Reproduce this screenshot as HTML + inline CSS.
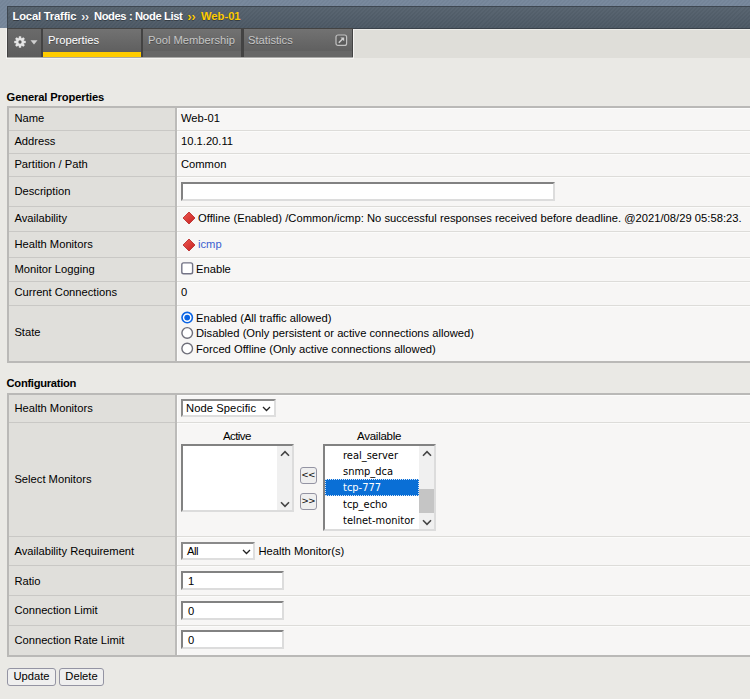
<!DOCTYPE html>
<html><head><meta charset="utf-8">
<title>Web-01</title>
<style>
html,body{margin:0;padding:0;}
body{width:750px;height:699px;overflow:hidden;background:#eae9e5;font-family:"Liberation Sans",Arial,sans-serif;font-size:11.2px;color:#000;position:relative;letter-spacing:0}
div,span,a{position:absolute;white-space:nowrap;box-sizing:border-box}
.t{line-height:14px;height:14px}
.b{font-weight:bold;letter-spacing:-0.25px}
#topbg{left:0;top:0;width:750px;height:28px;background:#76879b;background-image:repeating-linear-gradient(135deg,rgba(255,255,255,0.02) 0 1.42px,rgba(0,0,0,0.02) 1.42px 2.84px);border-bottom:0;}
#crumb{left:7px;top:6px;width:750px;height:23px;background-image:repeating-linear-gradient(135deg,rgba(255,255,255,0.02) 0 1.42px,rgba(0,0,0,0.025) 1.42px 2.84px),linear-gradient(#57636f,#4d5965);border-top:1px solid #3e4751;border-left:1px solid #3e4751;border-bottom:1px solid #3a424b;color:#fff;text-shadow:0 1px 0 rgba(0,0,0,.35);}
#crumb .t{top:2px}
.y{color:#ffcc00}
#tabrow{left:0;top:29px;width:750px;height:29px;background:#dfded9;border-top:1px solid #ecebe8}
#tableft{left:0;top:29px;width:7px;height:30px;background:#eae9e5}
#tabsw{left:6px;top:29px;width:348px;height:30px;background:#f5f4f2}
#tabsh{left:7px;top:57px;width:346px;height:1px;background:#a9a9a7}
#tabs{left:7px;top:28px;height:29px;width:346px;background:#434343;}
.tab{top:1px;height:28px;color:#fff;background:linear-gradient(#727272,#5b5b5b);text-shadow:0 1px 0 rgba(0,0,0,.3)}
.tab .t{top:4px}
.tab i{position:absolute;left:0;right:0;bottom:0;height:6px;background:#676767}
.tab.on i{background:#ffcc00;height:5px}
.off{color:#c6c6c6}
.tbl{left:7px;width:760px;background:#f7f6f5;border-left:2px solid;border-top:2px solid;border-bottom:2px solid;border-color:#bab9b7}
.lc{left:0;top:0;width:168px;bottom:0;background:#e0dfdb;border-right:2px solid #bcbbb9;}
.vs{left:168px;top:0;width:1px;bottom:0;background:#fcfcfb}
.vt{left:168px;right:0;top:0;height:1px;background:#fcfcfb}
.hl{left:0;width:166px;height:1px;background:#c9c8c5}
.hv{left:168px;right:0;height:1px;background:#dddcd9;box-shadow:0 1px 0 #fbfbfa}
.in{background:#fff;border:2px solid;border-color:#828282 #dcdcdc #dcdcdc #828282;}
.btn{background:#efefef;border:1px solid #9494a3;border-radius:3px;text-align:center}
.lb{font-family:"DejaVu Sans Condensed","DejaVu Sans","Liberation Sans",sans-serif;font-size:11px;letter-spacing:0;line-height:16px;height:16px;left:18px}
.rad{width:12px;height:12px;border-radius:50%;border:1px solid #666;background:#fff}
</style></head><body>
<div id="topbg"></div>
<div id="crumb">
 <span class="t b" style="left:4.5px;letter-spacing:-0.17px">Local Traffic</span>
 <span class="t b" style="left:73.3px;letter-spacing:-0.2px;color:#eee;font-size:12px;top:2.6px">››</span>
 <span class="t b" style="left:86px;letter-spacing:-0.4px">Nodes : Node List</span>
 <span class="t b y" style="left:179.6px;letter-spacing:-0.2px;font-size:12px;top:2.6px">››</span>
 <span class="t b y" style="left:193px;letter-spacing:0">Web-01</span>
</div>
<div id="tabrow"></div>
<div id="tableft"></div>
<div id="tabsw"></div><div id="tabsh"></div>
<div id="tabs">
 <div class="tab" style="left:1px;width:33px;background:linear-gradient(#6a6a6a,#5c5c5c)">
  <svg style="position:absolute;left:4.7px;top:6.3px" width="14" height="14" viewBox="-7.3 -7.3 14.6 14.6"><g fill="#e4e4e4"><circle r="4.1"/><rect x="-1.3" y="-6" width="2.6" height="12" rx=".5"/><rect x="-6" y="-1.3" width="12" height="2.6" rx=".5"/><g transform="rotate(45)"><rect x="-1.3" y="-6" width="2.6" height="12" rx=".5"/><rect x="-6" y="-1.3" width="12" height="2.6" rx=".5"/></g></g><circle r="1.7" fill="#5a5a5a"/></svg>
  <svg style="position:absolute;left:22px;top:11.4px" width="8" height="5" viewBox="0 0 8 5"><path d="M0.5 0.3h7L4 4.6z" fill="#cfcfcf"/></svg>
 </div>
 <div class="tab on" style="left:36px;width:98px"><span class="t" style="left:5px">Properties</span><i></i></div>
 <div class="tab off" style="left:136px;width:98px"><span class="t" style="left:5px">Pool Membership</span><i></i></div>
 <div class="tab off" style="left:237px;width:108px"><span class="t" style="left:4px">Statistics</span><i></i>
  <svg style="position:absolute;left:91px;top:5px" width="13" height="13" viewBox="0 0 13 13"><rect x="1" y="1" width="10.6" height="10.4" rx="2" fill="rgba(0,0,0,.1)" stroke="#c2c2c2" stroke-width="1.2"/><path d="M3.8 8.8L7.8 4.8" stroke="#d0d0d0" stroke-width="1.5" fill="none"/><path d="M5.4 3.5h3.8v3.8z" fill="#d0d0d0"/></svg>
 </div>
</div>

<span class="t b" style="left:6.6px;top:90px;letter-spacing:-0.14px">General Properties</span>
<div class="tbl" style="top:106px;height:257px">
 <div class="lc"></div><div class="vs"></div><div class="vt"></div>
 <div class="hl" style="top:22px"></div><div class="hv" style="top:22px"></div>
 <div class="hl" style="top:45px"></div><div class="hv" style="top:45px"></div>
 <div class="hl" style="top:68px"></div><div class="hv" style="top:68px"></div>
 <div class="hl" style="top:98px"></div><div class="hv" style="top:98px"></div>
 <div class="hl" style="top:123px"></div><div class="hv" style="top:123px"></div>
 <div class="hl" style="top:149px"></div><div class="hv" style="top:149px"></div>
 <div class="hl" style="top:173px"></div><div class="hv" style="top:173px"></div>
 <div class="hl" style="top:197px"></div><div class="hv" style="top:197px"></div>
</div>
<span class="t" style="left:14.4px;top:111px">Name</span><span class="t" style="left:181px;top:111px">Web-01</span>
<span class="t" style="left:14.4px;top:134px">Address</span><span class="t" style="left:181px;top:134px">10.1.20.11</span>
<span class="t" style="left:14.4px;top:157px">Partition / Path</span><span class="t" style="left:181px;top:157px">Common</span>
<span class="t" style="left:14.4px;top:184px">Description</span><div class="in" style="left:181px;top:182px;width:374px;height:19px"></div>
<span class="t" style="left:14.4px;top:211px">Availability</span>
<svg style="position:absolute;left:182px;top:211px" width="14" height="14" viewBox="0 0 14 14"><defs><linearGradient id="dg" x1="0" y1="0" x2="1" y2="1"><stop offset="0" stop-color="#f05a52"/><stop offset="1" stop-color="#c41f1f"/></linearGradient></defs><path d="M7 1L13 7L7 13L1 7z" fill="url(#dg)" stroke="#b52323" stroke-width=".8"/></svg>
<span class="t" style="left:198px;top:211px;letter-spacing:0.02px">Offline (Enabled) /Common/icmp: No successful responses received before deadline. @2021/08/29 05:58:23.</span>
<span class="t" style="left:14.4px;top:237px">Health Monitors</span>
<svg style="position:absolute;left:182px;top:237.5px" width="14" height="14" viewBox="0 0 14 14"><path d="M7 1L13 7L7 13L1 7z" fill="url(#dg)" stroke="#b52323" stroke-width=".8"/></svg>
<a class="t" style="left:198px;top:237px;color:#3b5fd0">icmp</a>
<span class="t" style="left:14.4px;top:262px">Monitor Logging</span>
<svg style="position:absolute;left:180px;top:261px" width="15" height="15" viewBox="0 0 15 15"><rect x="1.8" y="1.9" width="10.8" height="10.8" rx="1.8" fill="#fff" stroke="#737385" stroke-width="1.4"/></svg>
<span class="t" style="left:196px;top:262px">Enable</span>
<span class="t" style="left:14.4px;top:285px">Current Connections</span><span class="t" style="left:181px;top:285px">0</span>
<span class="t" style="left:14.4px;top:325px">State</span>
<svg style="position:absolute;left:180px;top:310px" width="15" height="46" viewBox="0 0 15 46"><circle cx="7.2" cy="7.6" r="5.2" fill="#fff" stroke="#0a64e4" stroke-width="1.6"/><circle cx="7.2" cy="7.6" r="2.9" fill="#0a64e4"/><circle cx="7.2" cy="22.9" r="5.3" fill="#fff" stroke="#6f6f7a" stroke-width="1.4"/><circle cx="7.2" cy="38.6" r="5.3" fill="#fff" stroke="#6f6f7a" stroke-width="1.4"/></svg>
<span class="t" style="left:196px;top:311px">Enabled (All traffic allowed)</span>
<span class="t" style="left:196px;top:326px">Disabled (Only persistent or active connections allowed)</span>
<span class="t" style="left:196px;top:342px">Forced Offline (Only active connections allowed)</span>

<span class="t b" style="left:6.6px;top:376px;letter-spacing:-0.3px">Configuration</span>
<div class="tbl" style="top:393px;height:264px">
 <div class="lc"></div><div class="vs"></div><div class="vt"></div>
 <div class="hl" style="top:27px"></div><div class="hv" style="top:27px"></div>
 <div class="hl" style="top:141px"></div><div class="hv" style="top:141px"></div>
 <div class="hl" style="top:170px"></div><div class="hv" style="top:170px"></div>
 <div class="hl" style="top:200px"></div><div class="hv" style="top:200px"></div>
 <div class="hl" style="top:230px"></div><div class="hv" style="top:230px"></div>
</div>
<span class="t" style="left:14.4px;top:401px">Health Monitors</span>
<div class="in" style="left:181px;top:399px;width:95px;height:18px;border-color:#8a8a8a #dedede #dedede #8a8a8a"><span class="t" style="left:3px;top:0px;letter-spacing:0.08px">Node Specific</span>
 <svg style="position:absolute;left:79.4px;top:5px" width="9" height="6" viewBox="0 0 9 6"><path d="M1 1L4.5 4.5L8 1" fill="none" stroke="#222" stroke-width="1.3"/></svg></div>
<span class="t" style="left:14.4px;top:472px">Select Monitors</span>
<span class="t" style="left:223px;top:429px;font-size:11.5px;letter-spacing:-0.6px">Active</span>
<span class="t" style="left:357px;top:429px;font-size:11.5px;letter-spacing:-0.25px">Available</span>
<div class="in" style="left:181px;top:444px;width:113px;height:68px">
 <div style="right:0;top:0;width:15px;bottom:0;background:#f0f0f0"></div>
 <svg style="position:absolute;left:97px;top:4.3px" width="10" height="7" viewBox="0 0 10 7"><path d="M1 5.7L5 1.7L9 5.7" fill="none" stroke="#444" stroke-width="1.6"/></svg>
 <svg style="position:absolute;left:97px;top:54.5px" width="10" height="7" viewBox="0 0 10 7"><path d="M1 1.3L5 5.3L9 1.3" fill="none" stroke="#444" stroke-width="1.6"/></svg>
</div>
<div class="btn" style="left:300px;top:467px;width:17px;height:17px"><span style="left:0;right:0;top:1px;font-size:9.3px;line-height:12px;letter-spacing:0;transform:scaleX(1.22)">&lt;&lt;</span></div>
<div class="btn" style="left:300px;top:493px;width:17px;height:17px"><span style="left:0;right:0;top:1px;font-size:9.3px;line-height:12px;letter-spacing:0;transform:scaleX(1.22)">&gt;&gt;</span></div>
<div class="in" style="left:323px;top:444px;width:113px;height:87px;overflow:hidden">
 <div style="left:0;top:33px;width:94px;height:17px;background:#0a6fd6;border:1px dotted #d6e6fa"></div>
 <span class="lb" style="top:2px">real_server</span>
 <span class="lb" style="top:18px">snmp_dca</span>
 <span class="lb" style="top:34px;color:#fff">tcp-777</span>
 <span class="lb" style="top:51px">tcp_echo</span>
 <span class="lb" style="top:67px">telnet-monitor</span>
 <div style="right:0;top:0;width:15px;bottom:0;background:#f0f0f0"></div>
 <div style="right:0;top:43px;width:15px;height:24px;background:#c5c5c5"></div>
 <svg style="position:absolute;left:97px;top:4.3px" width="10" height="7" viewBox="0 0 10 7"><path d="M1 5.7L5 1.7L9 5.7" fill="none" stroke="#444" stroke-width="1.6"/></svg>
 <svg style="position:absolute;left:97px;top:72.5px" width="10" height="7" viewBox="0 0 10 7"><path d="M1 1.3L5 5.3L9 1.3" fill="none" stroke="#444" stroke-width="1.6"/></svg>
</div>
<span class="t" style="left:14.4px;top:544px">Availability Requirement</span>
<div class="in" style="left:181px;top:542px;width:74px;height:18px;border-color:#8a8a8a #dedede #dedede #8a8a8a"><span class="t" style="left:4px;top:0px;letter-spacing:-0.5px">All</span>
 <svg style="position:absolute;left:58.7px;top:5px" width="9" height="6" viewBox="0 0 9 6"><path d="M1 1L4.5 4.5L8 1" fill="none" stroke="#222" stroke-width="1.3"/></svg></div>
<span class="t" style="left:258.5px;top:544px">Health Monitor(s)</span>
<span class="t" style="left:14.4px;top:573.5px">Ratio</span>
<div class="in" style="left:181px;top:571px;width:103px;height:19px"><span class="t" style="left:5px;top:1px">1</span></div>
<span class="t" style="left:14.4px;top:603px">Connection Limit</span>
<div class="in" style="left:181px;top:601px;width:103px;height:19px"><span class="t" style="left:5px;top:1px">0</span></div>
<span class="t" style="left:14.4px;top:633px">Connection Rate Limit</span>
<div class="in" style="left:181px;top:630px;width:103px;height:19px"><span class="t" style="left:5px;top:1px">0</span></div>
<div class="btn" style="left:7px;top:668px;width:49px;height:18px"><span class="t" style="left:0;right:0;top:0px">Update</span></div>
<div class="btn" style="left:59px;top:668px;width:45px;height:18px"><span class="t" style="left:0;right:0;top:0px">Delete</span></div>
</body></html>
